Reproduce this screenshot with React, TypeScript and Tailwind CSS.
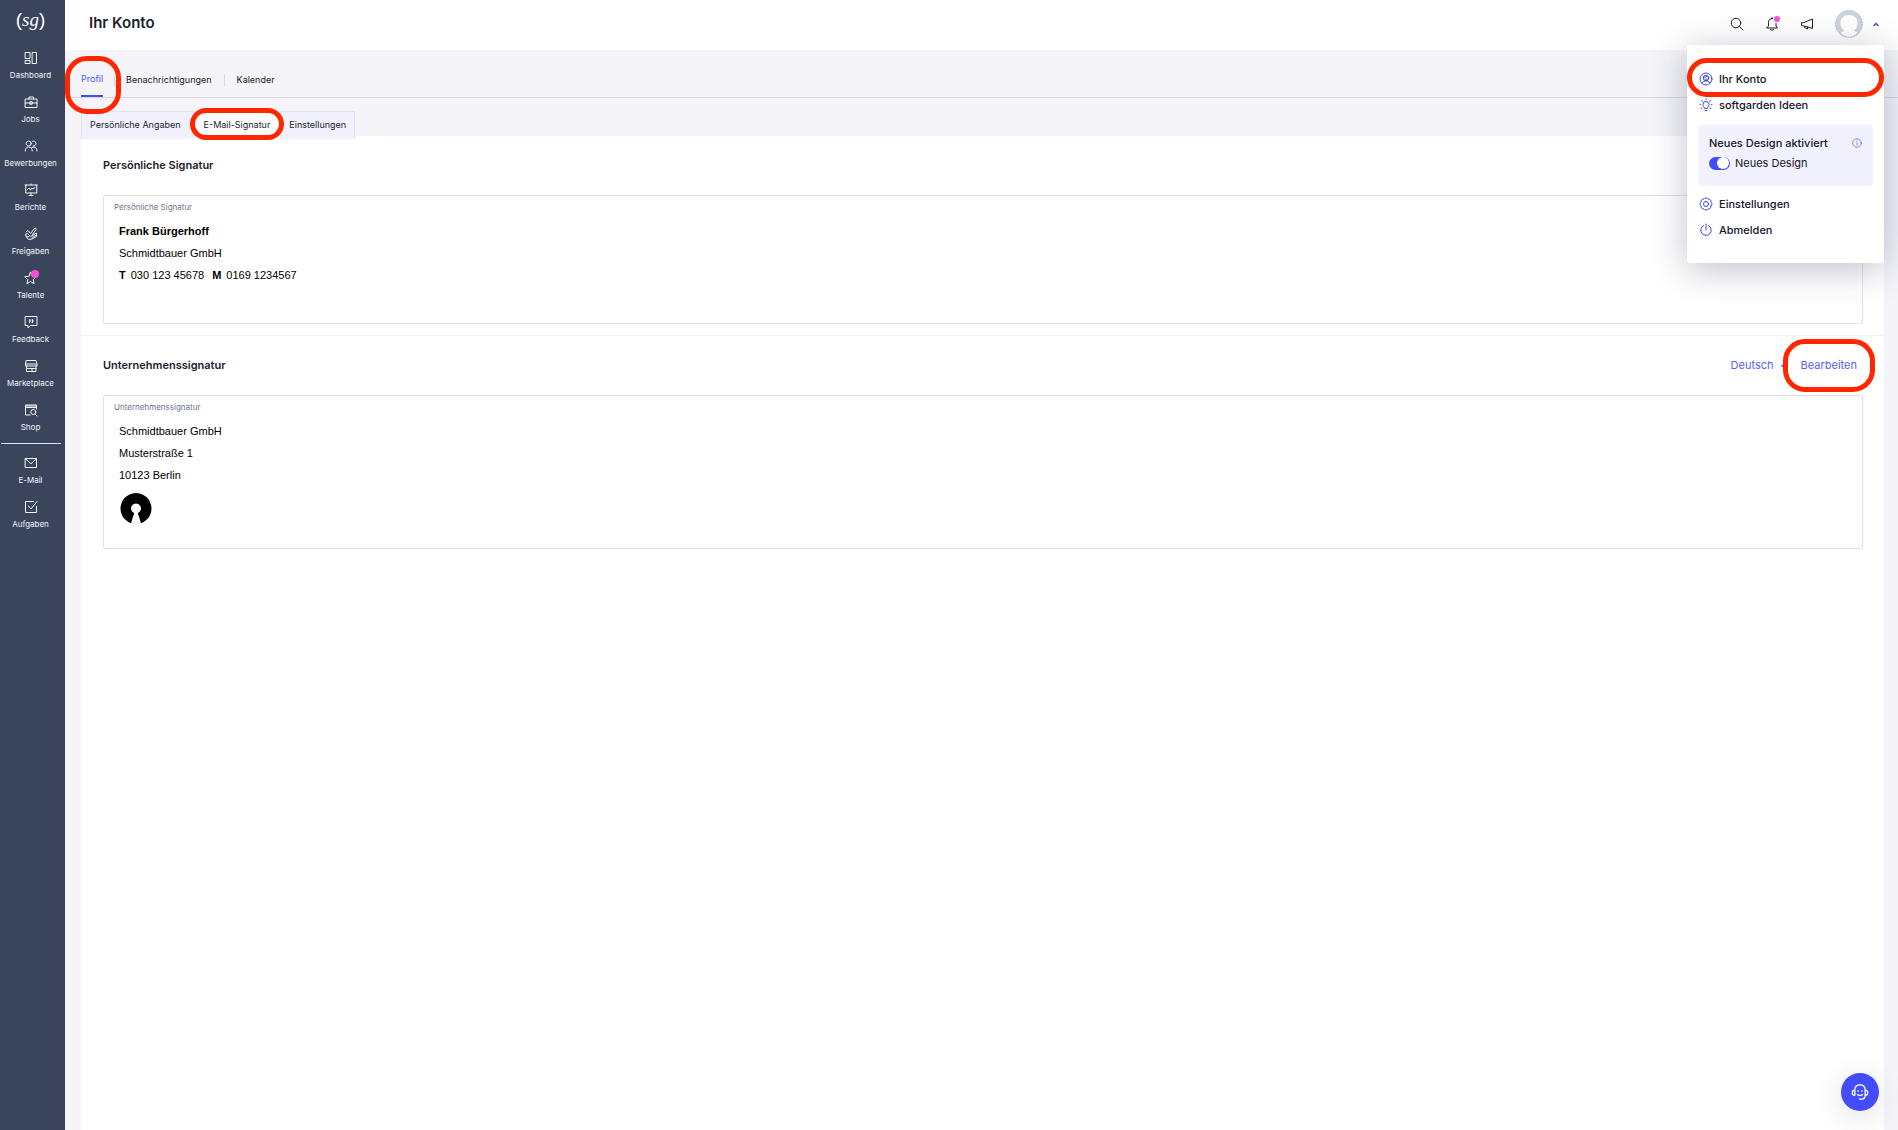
import { useState, type ReactNode } from 'react'

type IconProps = { className?: string; children: ReactNode }

function Icon({ className = 'size-[14px]', children }: IconProps) {
  return (
    <svg className={className} viewBox="0 0 28 28" fill="none" stroke="currentColor" strokeWidth={2} strokeLinejoin="round" strokeLinecap="round" aria-hidden="true">
      {children}
    </svg>
  )
}

const mainNav = [
  {
    label: 'Dashboard',
    icon: <path d="M3 3h9v12H3zM3 19h9v6H3zM17 3h8v22h-8z" />,
  },
  {
    label: 'Jobs',
    icon: (
      <>
        <path d="M3 8h23v17H3zM3 16h23M10 8V4h9v4" />
        <path d="M12.500 13.500h4v5h-4z" />
      </>
    ),
  },
  {
    label: 'Bewerbungen',
    icon: (
      <>
        <circle cx="9.500" cy="9" r="5" />
        <path d="M2.500 24c0-5 2.500-8 7-8s7 3 7 8" />
        <path d="M17 4.500a5 5 0 1 1 1.500 9.500M20 16c4 .5 6 3.500 6 8M16 17l4-1" />
      </>
    ),
  },
  {
    label: 'Berichte',
    icon: (
      <>
        <path d="M2 4h24M3.500 4v16h22V4M14 20v5M10 25h8M14 2v2" />
        <path d="M7 13l3-3 3 4 3-4 2 2 4-3" />
      </>
    ),
  },
  {
    label: 'Freigaben',
    icon: (
      <>
        <path d="M4 10l4-3 5 6 8-10c2-1 4 0 3 2l-7 10" />
        <path d="M3 15l4-2 6 6 12-7v4l-9 5M5 20l4 5 7-1 9-5v-3M3 15l2 5 5-1" />
      </>
    ),
  },
  {
    label: 'Talente',
    badge: true,
    icon: <path d="M13 3l3.500 7.500 8 1-6 5.500 1.500 8.500-7-4.500-7 4.500L7.500 17l-6-5.500 8-1z" />,
  },
  {
    label: 'Feedback',
    icon: (
      <>
        <path d="M3 3h23v18H13l-5 5v-5H3z" />
        <path d="M11 10h1v2l-1 3M16.500 10h1v2l-1 3" strokeWidth={2.6} />
      </>
    ),
  },
  {
    label: 'Marketplace',
    icon: <path d="M5 3h19l2 8v3H3v-3zM3 10h23M5 14v11h19V14M5 19h19M16 19v6" />,
  },
  {
    label: 'Shop',
    icon: (
      <>
        <path d="M12 24H3V4h22v8M3 9h22M3 6h22" />
        <circle cx="18.500" cy="18" r="5" />
        <path d="M22 22l4 4" />
      </>
    ),
  },
]

const toolNav = [
  { label: 'E-Mail', icon: <path d="M3 5h22v18H3zM3.500 6L14 15.500 24.500 6" /> },
  { label: 'Aufgaben', icon: <path d="M19 3H3v22h22V13M9 12l5 6L26 3" /> },
]

function NavItem({ label, icon, badge }: { label: string; icon: ReactNode; badge?: boolean }) {
  return (
    <a href="#" className="flex h-11 flex-col items-center text-[#f1f4fa]">
      <span className="relative ml-px">
        <Icon>{icon}</Icon>
        {badge && <span className="absolute -right-px -top-px size-2 rounded-full bg-[#ff4fd0]" />}
      </span>
      <span className="mt-1 text-[8px] leading-3">{label}</span>
    </a>
  )
}

function Sidebar() {
  return (
    <aside className="w-[65px] shrink-0 bg-[#3a455c] pr-1">
      <a href="#" aria-label="Startseite" className="flex h-[51px] items-start justify-center pt-2 font-['Liberation_Sans'] text-[19px] leading-6 text-white">
        (<i className="font-['Liberation_Serif']">sg</i>)
      </a>
      <nav>
        {mainNav.map((item) => (
          <NavItem key={item.label} {...item} />
        ))}
      </nav>
      <hr className="mb-3 ml-px mt-[-4px] border-[#dfe3ec]" />
      <nav>
        {toolNav.map((item) => (
          <NavItem key={item.label} {...item} />
        ))}
      </nav>
    </aside>
  )
}

function MenuLink({ label, icon }: { label: string; icon: ReactNode }) {
  return (
    <a href="#" className="flex h-[26px] items-center gap-[6px] pl-3">
      <Icon className="size-[14px] text-[#3f48e8]">{icon}</Icon>
      {label}
    </a>
  )
}

function AccountMenu() {
  const [newDesign, setNewDesign] = useState(true)

  return (
    <div className="absolute right-[14px] top-[45px] z-30 w-[197px] rounded-xs bg-white pb-5 pt-[21px] text-[11px] font-medium text-[#14152b] shadow-[0_6px_36px_rgba(40,45,80,0.3)]">
      <div className="relative">
        <MenuLink
          label="Ihr Konto"
          icon={
            <>
              <circle cx="14" cy="14" r="12" />
              <circle cx="14" cy="12" r="5.500" />
              <path d="M6 22c2-4 5-4 8-4s6 0 8 4M9 10c4 1 7 0 8-2M12 14c1 1 3 1 4 0" />
            </>
          }
        />
        <Marker className="-bottom-[5px] -top-2 inset-x-0 rounded-[20px]" />
      </div>
      <MenuLink
        label="softgarden Ideen"
        icon={
          <>
            <path d="M11 20c0-2-3-3-3-7a6 6 0 0 1 12 0c0 4-3 5-3 7zM12 25h4" />
            <path d="M14 2v1M5 5l2 2M23 5l-2 2M2 13h1M25 13h1M4 21l2-1M24 21l-2-1" />
          </>
        }
      />
      <div className="mx-[11px] mb-[5px] mt-[7px] h-[61px] rounded-sm bg-[#f2f2ff] px-[11px] pt-[10px]">
        <div className="flex h-4 items-center justify-between">
          Neues Design aktiviert
          <Icon className="size-[10px] text-[#5a60ee]">
            <circle cx="14" cy="14" r="12" />
            <path d="M14 13v7M14 8v1" />
          </Icon>
        </div>
        <label className="mt-1 flex h-4 items-center gap-[5px] font-normal">
          <input type="checkbox" className="peer sr-only" checked={newDesign} onChange={(e) => setNewDesign(e.target.checked)} />
          <span className="flex h-[13px] w-[21px] items-center justify-start rounded-full bg-gray-400 peer-checked:justify-end peer-checked:bg-[#434cff]">
            <span className="mx-px size-3 rounded-full bg-white" />
          </span>
          Neues Design
        </label>
      </div>
      <MenuLink
        label="Einstellungen"
        icon={
          <>
            <path d="M23.700 18A4.600 4.600 0 0 1 18 23.700 4.600 4.600 0 0 1 10 23.700 4.600 4.600 0 0 1 4.300 18 4.600 4.600 0 0 1 4.300 10 4.600 4.600 0 0 1 10 4.300 4.600 4.600 0 0 1 18 4.300 4.600 4.600 0 0 1 23.700 10 4.600 4.600 0 0 1 23.700 18z" />
            <circle cx="14" cy="14" r="5" />
          </>
        }
      />
      <MenuLink label="Abmelden" icon={<path d="M14 2v12M9 5a10.500 10.500 0 1 0 10 0" />} />
    </div>
  )
}

function Header() {
  return (
    <header className="relative flex h-[50px] items-center justify-between bg-white pb-[3px] pl-6 pr-[18px]">
      <h1 className="text-[15px] font-semibold">Ihr Konto</h1>
      <div className="flex items-center gap-[21px]">
        <button type="button" aria-label="Suche">
          <Icon>
            <circle cx="12" cy="12" r="9.500" />
            <path d="M19 19l7 7" />
          </Icon>
        </button>
        <button type="button" aria-label="Hinweise" className="relative">
          <Icon>
            <path d="M15 3c-5 0-8 3-8 8v7l-4 4h22l-3-4v-5M11 25c1 2 5 2 6 0M14 1v2" />
          </Icon>
          <span className="absolute -right-px -top-px size-[6px] rounded-full bg-[#ff4fd0]" />
        </button>
        <button type="button" aria-label="Neuigkeiten">
          <Icon>
            <path d="M3 12v5l5 1 17 5V4L8 11zM9 19v2l6 3v-4" />
          </Icon>
        </button>
        <button type="button" aria-label="Benutzermenü" className="flex items-center gap-[9px]">
          <svg className="size-7" viewBox="0 0 28 28" aria-hidden="true">
            <circle cx="14" cy="14" r="13.500" fill="#ced3da" stroke="#b9bfe6" strokeWidth="1" strokeDasharray="2 1" />
            <path d="M14 5c5 0 8.500 3 8.500 8 0 4-1.500 6-3.500 7.500 1 1 2 1.500 3.500 2A13.400 13.400 0 0 1 14 27a13.400 13.400 0 0 1-8.500-4.500c1.500-.5 2.500-1 3.500-2C7 19 5.500 17 5.500 13 5.500 8 9 5 14 5z" fill="#fff" />
          </svg>
          <svg className="h-2 w-2" viewBox="0 0 8 8" fill="none" stroke="#434cff" strokeWidth="1.500" aria-hidden="true">
            <path d="M1.500 6L4 3.500 6.500 6" />
          </svg>
        </button>
      </div>
      <AccountMenu />
    </header>
  )
}

function Marker({ className }: { className: string }) {
  return <span className={`pointer-events-none absolute z-20 border-5 border-[#ff2600] ${className}`} />
}

function Tabs() {
  return (
    <nav className="flex h-12 items-center border-b border-[#d8dae2] pb-[2px] pl-4 pt-[15px] text-[9px] leading-3" aria-label="Konto">
      <a href="#" className="relative flex h-[33px] items-center border-b-2 border-[#434cff] text-[#5058ff]">
        Profil
        <Marker className="-bottom-[19px] -left-4 -right-[18px] -top-2 rounded-[22px]" />
      </a>
      <span className="mx-[11px] h-[13px] w-px bg-[#d8dae2]" />
      <a href="#">Benachrichtigungen</a>
      <span className="mx-3 h-[13px] w-px bg-[#d8dae2]" />
      <a href="#">Kalender</a>
    </nav>
  )
}

function SubTabs() {
  return (
    <div className="relative z-10 -mb-[3px] ml-4 mt-[13px] flex h-7 w-fit border-x border-t border-[#e2e2f2] bg-[#f2f2ff] text-[9px] leading-3">
      <button type="button" className="pb-0.5 pl-2 pr-3">Persönliche Angaben</button>
      <button type="button" className="relative border-x border-[#e2e2f2] bg-white px-[10px] pb-0.5">
        E-Mail-Signatur
        <Marker className="-bottom-px -left-1 -right-1 -top-1 rounded-[18px]" />
      </button>
      <button type="button" className="px-2 pb-0.5">Einstellungen</button>
    </div>
  )
}

function SignatureBox({ label, className, children }: { label: string; className: string; children: ReactNode }) {
  return (
    <div className={`rounded-xs border border-[#e0e2ea] pl-[10px] pt-[3px] ${className}`}>
      <p className="text-[8px] leading-4 text-[#6b768c]">{label}</p>
      <div className="pl-[5px] pt-[5px] font-['Liberation_Sans',sans-serif] text-[11px] leading-[22px] text-black">{children}</div>
    </div>
  )
}

export default function App() {
  return (
    <div className="flex min-h-screen bg-[#f4f4f9] font-[Inter,sans-serif] text-[#1c1d2e]">
      <Sidebar />
      <div className="flex min-w-0 flex-1 flex-col">
        <Header />
        <Tabs />
        <SubTabs />
        <main className="ml-4 mr-[14px] flex-1 bg-white">
          <section className="border-b border-[#f0f0f4] pb-[11px] pl-[22px] pr-[21px]">
            <h2 className="flex h-[59px] items-center text-[11px] font-semibold">Persönliche Signatur</h2>
            <SignatureBox label="Persönliche Signatur" className="pb-[37px]">
              <p className="font-bold">Frank Bürgerhoff</p>
              <p>Schmidtbauer GmbH</p>
              <p className="flex gap-[5px]">
                <b>T</b>
                <span>030 123 45678</span>
                <b className="ml-[3px]">M</b>
                <span>0169 1234567</span>
              </p>
            </SignatureBox>
          </section>

          <section className="pl-[22px] pr-[21px]">
            <div className="flex h-[59px] items-center justify-between text-[11px]">
              <h2 className="font-semibold">Unternehmenssignatur</h2>
              <div className="flex items-center pr-[6px] text-[#5a61fa]">
                <select aria-label="Sprache" className="appearance-none">
                  <option>Deutsch</option>
                </select>
                <svg className="ml-[6px] mr-[13px] size-2" viewBox="0 0 8 8" fill="none" stroke="#434cff" strokeWidth="1.500" aria-hidden="true">
                  <path d="M1.500 3L4 5.500 6.500 3" />
                </svg>
                <button type="button" className="relative">
                  Bearbeiten
                  <Marker className="-inset-x-[18px] -inset-y-[18px] rounded-[22px]" />
                </button>
              </div>
            </div>
            <SignatureBox label="Unternehmenssignatur" className="pb-[23px]">
              <p>Schmidtbauer GmbH</p>
              <p>Musterstraße 1</p>
              <p>10123 Berlin</p>
              <svg className="ml-px mt-[7px] size-8" viewBox="0 0 32 32" aria-hidden="true">
                <path d="M11 30.200L14.200 20.100A5 5 0 1 1 17.800 20.100L21 30.200A15.500 15.500 0 1 0 11 30.200z" fill="#000" />
              </svg>
            </SignatureBox>
          </section>
        </main>
      </div>

      {/* Support chat */}
      <button type="button" aria-label="Support" className="fixed bottom-[19px] right-[19px] z-30 flex size-[38px] items-center justify-center rounded-full bg-[#434cff] text-white shadow-[0_6px_30px_rgba(40,45,90,0.14)]">
        <Icon className="size-[18px]">
          <path d="M6 11c0-5 3-8 8-8s8 3 8 8M6 11v8c-3 0-4-1-4-4s1-4 4-4zM22 11v8c3 0 4-1 4-4s-1-4-4-4zM22 19c0 4-3 6-6 6M13 25h3" />
          <path d="M11 12v1M17 12v1M10 18c2 2 6 2 8 0" />
        </Icon>
      </button>
    </div>
  )
}
